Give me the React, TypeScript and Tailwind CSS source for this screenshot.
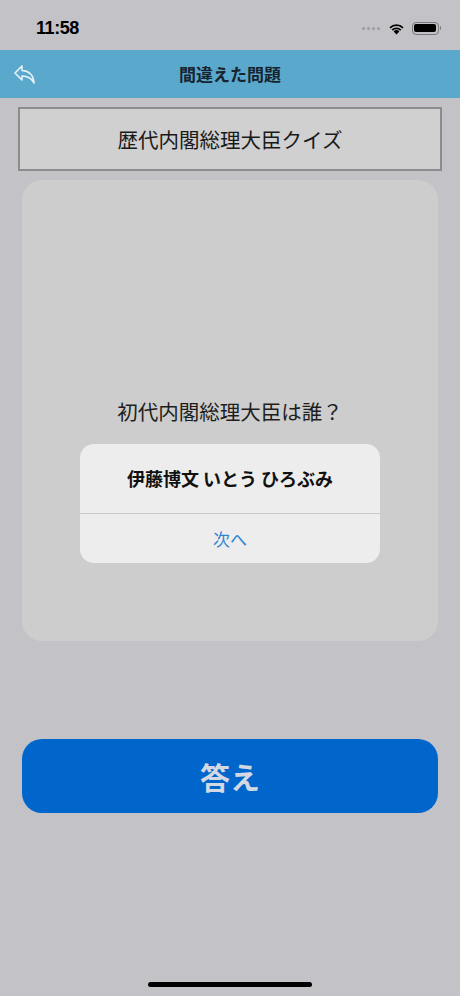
import React from "react";

const JP = { fontFamily: '"Noto Sans CJK JP", "Noto Sans", sans-serif' };

function BackIcon() {
  return (
    <svg width="24" height="22" viewBox="0 0 24 22" fill="none">
      <path
        d="M9 2 L2 9 L9 16 L9 12 C14 12 18 13 21 19 C20.5 12 17 7 9 6.5 Z"
        stroke="#e8f2f8"
        strokeWidth="1.6"
        strokeLinejoin="round"
        fill="none"
      />
    </svg>
  );
}

function Wifi() {
  return (
    <svg width="17" height="13" viewBox="0 0 17 13">
      <path d="M8.5 12.5 L5.6 9.4 A4.2 4.2 0 0 1 11.4 9.4 Z" fill="#000" />
      <path d="M3.6 7.4 A7 7 0 0 1 13.4 7.4 L12.1 8.7 A5.2 5.2 0 0 0 4.9 8.7 Z" fill="#000" />
      <path d="M1.4 5.2 A10 10 0 0 1 15.6 5.2 L14.3 6.5 A8.2 8.2 0 0 0 2.7 6.5 Z" fill="#000" />
    </svg>
  );
}

function Battery() {
  return (
    <div className="flex items-center">
      <div className="w-[27px] h-[13px] rounded-[4px] border border-[#7a7a7e] p-[1.5px]">
        <div className="w-full h-full rounded-[2px] bg-black" />
      </div>
      <div className="w-[1.5px] h-[4px] bg-[#7a7a7e] rounded-r ml-[1px]" />
    </div>
  );
}

export default function App() {
  return (
    <div className="w-[460px] h-[996px] bg-[#c3c2c7] flex flex-col relative overflow-hidden" style={JP}>
      {/* status bar */}
      <div className="h-[50px] flex items-center justify-between pl-[36px] pr-[19px] pt-[6px]">
        <span
          className="text-[18px] font-bold text-black tracking-tight"
          style={{ fontFamily: '"Liberation Sans", Inter, sans-serif' }}
        >
          11:58
        </span>
        <div className="flex items-center gap-[7px]">
          <div className="flex gap-[2px] items-center mr-[1px]">
            <span className="w-[3px] h-[3px] rounded-full bg-[#9c9ca0]" />
            <span className="w-[3px] h-[3px] rounded-full bg-[#9c9ca0]" />
            <span className="w-[3px] h-[3px] rounded-full bg-[#9c9ca0]" />
            <span className="w-[3px] h-[3px] rounded-full bg-[#9c9ca0]" />
          </div>
          <Wifi />
          <Battery />
        </div>
      </div>

      {/* nav bar */}
      <div className="h-[48px] bg-[#5aa8cc] flex items-center relative">
        <div className="absolute left-[13px] top-[14px]">
          <BackIcon />
        </div>
        <div className="flex-1 text-center text-[17px] font-bold text-[#17242e]">間違えた問題</div>
      </div>

      {/* title box */}
      <div className="mx-[18px] mt-[9px] h-[64px] border-2 border-[#8c8c8e] bg-[#d0d0d1] flex items-center justify-center">
        <span className="text-[20.5px] text-[#1a1a1a]">歴代内閣総理大臣クイズ</span>
      </div>

      {/* card */}
      <div className="mx-[22px] mt-[9px] h-[461px] rounded-[20px] bg-[#cdcdcd] flex flex-col items-center pt-[215px]">
        <div className="text-[20.5px] text-[#1e1e1e] leading-[32px]">初代内閣総理大臣は誰？</div>
        <div className="mt-[17px] w-[300px] rounded-[14px] bg-[#ededed] flex flex-col">
          <div className="h-[70px] flex items-center justify-center border-b border-[#c9c9cb]">
            <span className="text-[18px] font-bold text-[#111]">伊藤博文 いとう ひろぶみ</span>
          </div>
          <div className="h-[49px] flex items-center justify-center">
            <span className="text-[17px] text-[#2f86d6]">次へ</span>
          </div>
        </div>
      </div>

      {/* answer button */}
      <div className="mx-[22px] mt-[98px] h-[74px] rounded-[20px] bg-[#0066cc] flex items-center justify-center">
        <span className="text-[30px] font-bold text-[#d3d8e2]">答え</span>
      </div>

      {/* home indicator */}
      <div className="absolute bottom-[9px] left-[148px] w-[164px] h-[5px] rounded-full bg-black" />
    </div>
  );
}
